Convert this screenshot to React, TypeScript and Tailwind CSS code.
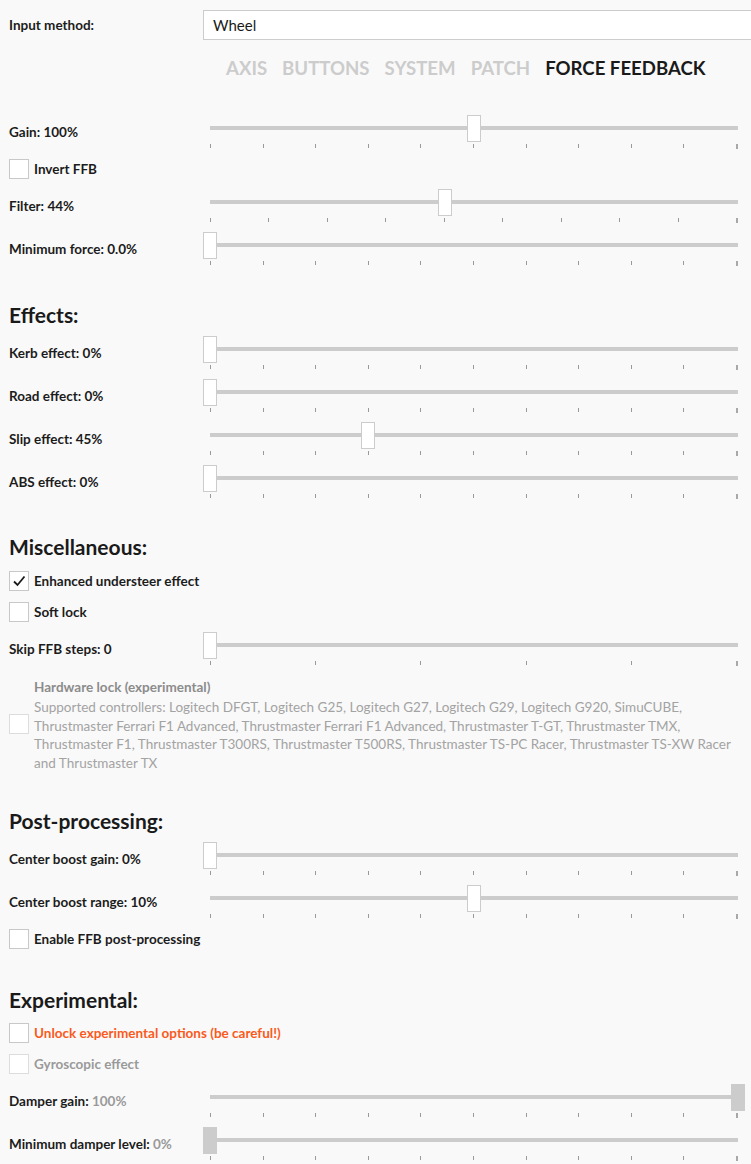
import React from 'react';

type SliderProps = {
  value: number;
  ticks?: number;
  disabled?: boolean;
};

const Slider = ({ value, ticks = 11, disabled = false }: SliderProps) => {
  const marks = Array.from({ length: ticks }, (_, i) => i);
  return (
    <div className="relative w-[542px] h-[32px] shrink-0">
      <div className="absolute left-[7px] right-[7px] top-[10px] h-[4px] bg-[#cccccc]" />
      <div className="absolute left-[7px] right-[7px] top-[28px] flex justify-between items-start">
        {marks.map((i) => (
          <div
            key={i}
            className={
              i === ticks - 1
                ? 'w-[2px] h-[5px] bg-[#a8a8a8]'
                : 'w-px h-[4px] bg-[#9a9a9a]'
            }
          />
        ))}
      </div>
      <div
        className={
          disabled
            ? 'absolute top-[-1px] w-[14px] h-[27px] bg-[#cccccc]'
            : 'absolute top-[-1px] w-[14px] h-[27px] bg-white border border-[#cccccc]'
        }
        style={{ left: `${value * 528}px` }}
      />
    </div>
  );
};

type SliderRowProps = {
  label: React.ReactNode;
  value: number;
  ticks?: number;
  disabled?: boolean;
};

const SliderRow = ({ label, value, ticks, disabled }: SliderRowProps) => (
  <div className="flex items-center h-[32px]">
    <div className="w-[203px] pl-[9px] text-[13.5px] font-bold text-[#1c1c1c]">{label}</div>
    <Slider value={value} ticks={ticks} disabled={disabled} />
  </div>
);

type CheckRowProps = {
  label: string;
  checked?: boolean;
  disabled?: boolean;
  tone?: 'normal' | 'warn' | 'muted';
};

const Box = ({ checked = false, disabled = false }: { checked?: boolean; disabled?: boolean }) => (
  <div
    className={
      disabled
        ? 'w-[20px] h-[20px] shrink-0 bg-white border border-[#dddddd]'
        : 'w-[20px] h-[20px] shrink-0 bg-white border border-[#c8c8c8] flex items-center justify-center'
    }
  >
    {checked && (
      <svg width="14" height="14" viewBox="0 0 14 14" fill="none">
        <path d="M2 7.5 L5.5 11 L12.5 2.5" stroke="#1a1a1a" strokeWidth="1.8" />
      </svg>
    )}
  </div>
);

const CheckRow = ({ label, checked, disabled, tone = 'normal' }: CheckRowProps) => {
  const color =
    tone === 'warn' ? 'text-[#fb5a1c]' : tone === 'muted' ? 'text-[#9a9a9a]' : 'text-[#1c1c1c]';
  return (
    <div className="flex items-center gap-[5px] h-[20px] pl-[9px]">
      <Box checked={checked} disabled={disabled} />
      <span className={`text-[13.5px] font-bold ${color}`}>{label}</span>
    </div>
  );
};

const Heading = ({ children, gap = 'mb-[8px]' }: { children: React.ReactNode; gap?: string }) => (
  <h2 className={`pl-[9px] h-[28px] leading-[28px] text-[21px] font-bold text-[#1a1a1a] ${gap}`}>
    {children}
  </h2>
);

const tabs = ['AXIS', 'BUTTONS', 'SYSTEM', 'PATCH', 'FORCE FEEDBACK'];

export default function App() {
  return (
    <div className="min-h-screen w-[751px] overflow-hidden bg-[#f9f9f9] font-['Lato',sans-serif] pb-[5px]">
      <div className="flex items-center pt-[10px] h-[40px]">
        <div className="w-[203px] pl-[9px] text-[13.5px] font-bold text-[#1c1c1c]">Input method:</div>
        <div className="flex-1 h-[30px] bg-white border border-r-0 border-[#cccccc] flex items-center pl-[9px] text-[15px] text-[#1a1a1a]">
          Wheel
        </div>
      </div>

      <div className="flex gap-[15px] pl-[226px] mt-[14px] h-[28px] leading-[28px] text-[18.6px] font-bold">
        {tabs.map((t) => (
          <span key={t} className={t === 'FORCE FEEDBACK' ? 'text-[#1a1a1a]' : 'text-[#cccccc]'}>
            {t}
          </span>
        ))}
      </div>

      <div className="flex flex-col gap-[11px] mt-[34px]">
        <SliderRow label="Gain: 100%" value={0.5} />
        <CheckRow label="Invert FFB" />
        <SliderRow label="Filter: 44%" value={4 / 9} ticks={10} />
        <SliderRow label="Minimum force: 0.0%" value={0} />
      </div>

      <div className="mt-[36px]">
        <Heading>Effects:</Heading>
        <div className="flex flex-col gap-[11px]">
          <SliderRow label="Kerb effect: 0%" value={0} />
          <SliderRow label="Road effect: 0%" value={0} />
          <SliderRow label="Slip effect: 45%" value={0.3} />
          <SliderRow label="ABS effect: 0%" value={0} />
        </div>
      </div>

      <div className="mt-[35px]">
        <Heading gap="mb-[10px]">Miscellaneous:</Heading>
        <div className="flex flex-col gap-[11px]">
          <CheckRow label="Enhanced understeer effect" checked />
          <CheckRow label="Soft lock" />
          <SliderRow label="Skip FFB steps: 0" value={0} ticks={6} />
          <div className="flex items-center gap-[5px] pl-[9px]">
            <Box disabled />
            <div className="flex flex-col">
              <span className="text-[13.5px] font-bold text-[#8c8c8c] leading-[22px]">
                Hardware lock (experimental)
              </span>
              <p className="text-[13.5px] leading-[18.5px] text-[#a3a3a3] pr-[2px]">
                Supported controllers: Logitech DFGT, Logitech G25, Logitech G27, Logitech G29, Logitech G920,
                SimuCUBE, Thrustmaster Ferrari F1 Advanced, Thrustmaster Ferrari F1 Advanced, Thrustmaster T-GT,
                Thrustmaster TMX, Thrustmaster F1, Thrustmaster T300RS, Thrustmaster T500RS, Thrustmaster TS-PC
                Racer, Thrustmaster TS-XW Racer and Thrustmaster TX
              </p>
            </div>
          </div>
        </div>
      </div>

      <div className="mt-[35px]">
        <Heading>Post-processing:</Heading>
        <div className="flex flex-col gap-[11px]">
          <SliderRow label="Center boost gain: 0%" value={0} />
          <SliderRow label="Center boost range: 10%" value={0.5} />
          <CheckRow label="Enable FFB post-processing" />
        </div>
      </div>

      <div className="mt-[37px]">
        <Heading gap="mb-[9px]">Experimental:</Heading>
        <div className="flex flex-col gap-[11px]">
          <CheckRow label="Unlock experimental options (be careful!)" tone="warn" />
          <CheckRow label="Gyroscopic effect" tone="muted" disabled />
          <SliderRow
            label={
              <>
                Damper gain: <span className="text-[#9a9a9a]">100%</span>
              </>
            }
            value={1}
            disabled
          />
          <SliderRow
            label={
              <>
                Minimum damper level: <span className="text-[#9a9a9a]">0%</span>
              </>
            }
            value={0}
            disabled
          />
        </div>
      </div>
    </div>
  );
}
